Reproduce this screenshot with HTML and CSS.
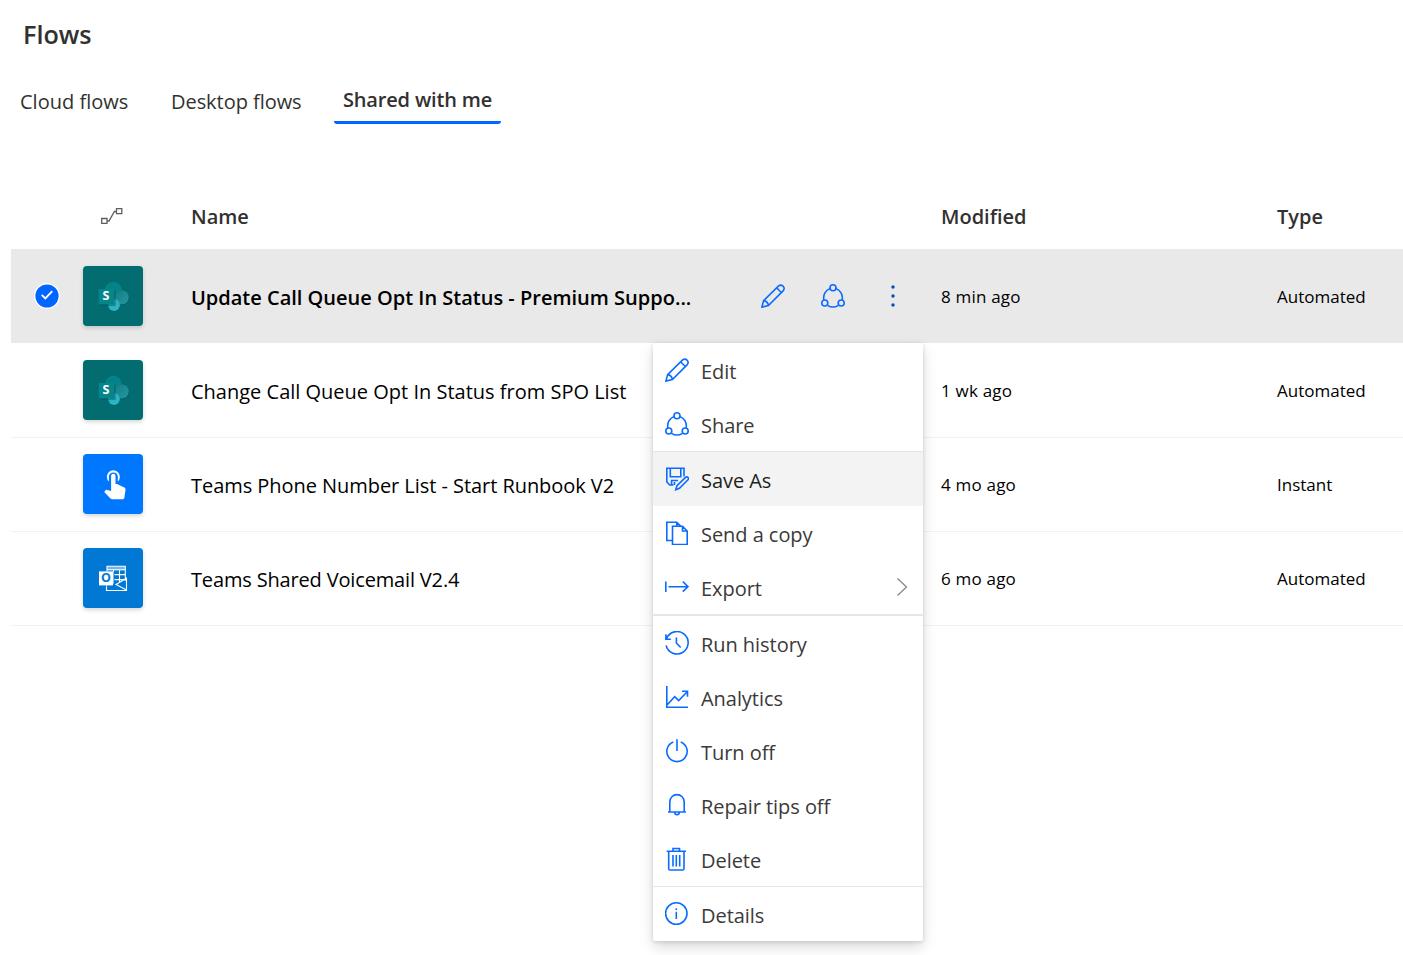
FILE: index.html
```html
<!DOCTYPE html>
<html lang="en">
<head>
<meta charset="utf-8">
<title>Flows</title>
<link rel="stylesheet" href="styles.css">
</head>
<body>
<svg class="defs" width="0" height="0">
  <defs>
    <linearGradient id="g-mid" x1="0" y1="0" x2="1" y2="1"><stop offset="0" stop-color="#137f86"/><stop offset="1" stop-color="#2596a0"/></linearGradient>
    <symbol id="i-pencil" viewBox="0 0 24 24"><path d="M.9 23.1 2.6 16.6 17.6 1.9a3.35 3.35 0 0 1 4.7 4.7L7.4 21.5ZM15.6 3.8l4.7 4.7M2.6 16.6c2.6.3 4.4 2.2 4.8 4.9"/></symbol>
    <symbol id="i-share" viewBox="0 0 24 24"><circle cx="12" cy="3.8" r="3"/><circle cx="3.8" cy="19" r="3"/><circle cx="20.2" cy="19" r="3"/><path d="M9.2 4.4C4.6 6 1.8 11 2.9 16M14.8 4.4c4.6 1.6 7.4 6.600 6.3 11.600M6.500 21.3c3.300 2.100 7.700 2.100 11 0"/></symbol>
    <symbol id="i-sharepoint" viewBox="0 0 32 32">
      <circle cx="16.300" cy="10.600" r="9.300" fill="#024f53" opacity=".4"/><circle cx="16.300" cy="10.100" r="8.700" fill="#038387"/>
      <circle cx="24.500" cy="18" r="7.500" fill="#024f53" opacity=".5"/><circle cx="24.500" cy="17.400" r="7.200" fill="url(#g-mid)"/>
      <circle cx="17" cy="25.500" r="6" fill="#024f53" opacity=".4"/><circle cx="17" cy="25" r="5.900" fill="#2bb4c3"/>
      <path d="M3.500 10.500h15.200v15.600H3.500Z" fill="#025c60" opacity=".5"/><rect x="1.700" y="9" width="15.300" height="15.300" rx=".6" fill="#05868a"/>
    </symbol>
  </defs>
</svg>
<main class="page">
  <h1 class="title">Flows</h1>
  <nav class="tabs">
    <a class="tab tab-cloud">Cloud flows</a>
    <a class="tab tab-desktop">Desktop flows</a>
    <a class="tab active">Shared with me</a>
  </nav>
  <section class="table">
    <div class="row head">
      <div></div>
      <div><svg class="flow-icon" viewBox="0 0 22 16"><path d="M.7 10.500h5.300v5H.7ZM15.500.7h5.300v5h-5.300ZM6 13h2L13.400 3.500h2.100"/></svg></div>
      <div>Name</div><div></div>
      <div>Modified</div><div>Type</div>
    </div>
    <div class="row selected">
      <div class="check"><svg viewBox="0 0 26 26"><circle cx="13" cy="13" r="13" fill="#fff"/><circle cx="13" cy="13" r="11.600" fill="#06f"/><path d="m7.700 11.800 3.600 3.600 7-7.300" fill="none" stroke="#fff" stroke-width="1.900"/></svg></div>
      <div class="tile teal"><svg viewBox="0 0 32 32"><use href="#i-sharepoint"/></svg><b>S</b></div>
      <div class="name">Update Call Queue Opt In Status - Premium Suppo...</div>
      <div class="actions"><svg class="icon"><use href="#i-pencil"/></svg><svg class="icon"><use href="#i-share"/></svg><svg class="dots" viewBox="0 0 24 24"><circle cx="12" cy="3" r="1.700"/><circle cx="12" cy="12" r="1.700"/><circle cx="12" cy="21" r="1.700"/></svg></div>
      <div class="cell ago">8 min ago</div><div class="cell">Automated</div>
    </div>
    <div class="row">
      <div></div>
      <div class="tile teal"><svg viewBox="0 0 32 32"><use href="#i-sharepoint"/></svg><b>S</b></div>
      <div class="name">Change Call Queue Opt In Status from SPO List</div><div></div>
      <div class="cell ago">1 wk ago</div><div class="cell">Automated</div>
    </div>
    <div class="row">
      <div></div>
      <div class="tile blue"><svg viewBox="0 0 32 32"><path fill="#fff" transform="translate(1 .3)" d="M10.900 13.200A6.500 6.500 0 1 1 19.800 13.200V8a4.500 4.500 0 0 0-8.900 0ZM13.100 7.700a2.200 2.200 0 0 1 4.400 0v8.100h1.600l7.200 3.500c1 .5 1.300 1.300 1.200 2.200l-1.100 7.600c-.2 1.200-1 1.900-2.200 1.900H14.300c-.7 0-1.300-.3-1.800-.8L6.200 23.700l1.200-1.600c.5-.5 1-.6 1.700-.5l4 1Z"/></svg></div>
      <div class="name phone">Teams Phone Number List - Start Runbook V2</div><div></div>
      <div class="cell ago">4 mo ago</div><div class="cell">Instant</div>
    </div>
    <div class="row">
      <div></div>
      <div class="tile azure"><svg viewBox="0 0 32 32"><g transform="translate(.5 .8)"><path d="M9.500 3.500h18v4h-18Z" fill="#fff" opacity=".45"/><g fill="none" stroke="#fff" stroke-width="1.100"><path d="M9.500 9V3.500h18.300V18M9.500 7h18M10 11.800h17.500M16 7v14M22 7v13M15 16.800h12.500M9 22v5.700h20V15.500l-10.500 6.200 10.500 5.500"/></g><path d="M2.500 9h15v14.800h-15Z" fill="#0078d4" opacity=".5"/><rect x="1.500" y="8.600" width="14" height="14" fill="#fff"/></g></svg><b>O</b></div>
      <div class="name voicemail">Teams Shared Voicemail V2.4</div><div></div>
      <div class="cell ago">6 mo ago</div><div class="cell">Automated</div>
    </div>
  </section>
</main>
<div class="menu">
  <div class="item"><svg class="icon"><use href="#i-pencil"/></svg><span>Edit</span></div>
  <div class="item"><svg class="icon"><use href="#i-share"/></svg><span>Share</span></div>
  <hr>
  <div class="item hover"><svg class="icon" viewBox="0 0 24 24"><path d="M8.500 18H4.800L1.800 15V1.300h17.200V9.500M5.300 1.500v8.300h10.500V1.500M6.600 18v-4.500h6.400M9.500 18v-3M10.800 22.600l1.200-3.900 8.500-8.300a1.700 1.700 0 0 1 2.500 2.400l-8.500 8.500Z"/></svg><span>Save As</span></div>
  <div class="item"><svg class="icon" viewBox="0 0 24 24"><path d="M7.500 19.500H1.800V1.300h10l4 4M7.500 5.300h10L22.200 10v13.500H7.500ZM17.500 5.500V10h4.500M11.800 1.500v3.800"/></svg><span>Send a copy</span></div>
  <div class="item"><svg class="icon" viewBox="0 0 24 24"><path d="M.8 6.500v10.500M3.500 11.700h19.500M17.800 6.700l5.200 5-5.200 5"/></svg><span>Export</span><svg class="chev" viewBox="0 0 12 20"><path d="m1.500 1.500 9 8.500-9 8.500"/></svg></div>
  <hr class="thick">
  <div class="item"><svg class="icon" viewBox="0 0 24 24"><path d="M1.600 7.500A11.200 11.200 0 1 1 1.100 14.500M.9 3.200v5h5M11.400 6.500V12l4.300 4.500"/></svg><span>Run history</span></div>
  <div class="item"><svg class="icon" viewBox="0 0 24 24"><path d="M1.800 1v21.300H23M2.300 19.800l7.400-8.200 4 4L22 7M17 6.300h5.500v5.500"/></svg><span>Analytics</span></div>
  <div class="item"><svg class="icon" viewBox="0 0 24 24"><path d="M12 .3V12M8.300 2.900a10.200 10.200 0 1 0 7.400 0"/></svg><span>Turn off</span></div>
  <div class="item"><svg class="icon" viewBox="0 0 24 24"><path d="M3 19h18M4.800 19V8.800a7.200 7.200 0 0 1 14.400 0V19M9.700 19.300c0 3.300 4.600 3.300 4.600 0"/></svg><span>Repair tips off</span></div>
  <div class="item"><svg class="icon" viewBox="0 0 24 24"><path d="M1.700 4.200h19.300M8 4V1.500h6.500V4M3.700 4.500v17.200q0 1.300 1.300 1.300h12.700q1.300 0 1.300-1.300V4.500M8 8v11.500M11.300 8v11.500M14.700 8v11.500"/></svg><span>Delete</span></div>
  <hr>
  <div class="item"><svg class="icon" viewBox="0 0 24 24"><circle cx="11.300" cy="11.500" r="10.700"/><path d="M11.300 9.700v7.300M11.300 6.300v1.700"/></svg><span>Details</span></div>
</div>
</body>
</html>
```
FILE: styles.css
```css
* { box-sizing: border-box; }
body { margin: 0; width: 1403px; height: 955px; overflow: hidden; position: relative; background: #fff; color: #323130; font-family: "Open Sans", "Noto Sans", sans-serif; font-size: 20px; }
.defs { position: absolute; }
.page { padding: 16px 0 0 11px; }
.title { margin: 0 0 0 12px; font-size: 25.2px; line-height: 36px; font-weight: 600; }
.tabs { display: flex; margin-top: 28px; height: 44px; }
.tab { line-height: 44px; }
.tab-cloud { margin-left: 9px; width: 151px; }
.tab-desktop { width: 163px; letter-spacing: -0.05px; }
.active { width: 167px; padding-left: 9px; line-height: 40px; font-weight: 600; letter-spacing: -0.17px; border-bottom: 3px solid #06f; border-radius: 0 0 3px 3px; }
.table { margin-top: 60px; }
.row { display: grid; grid-template-columns: 72px 108px 556px 194px 336px 126px; height: 94px; align-items: center; box-shadow: 0 1px 0 #f3f2f1; color: #000; }
.head { height: 65px; box-shadow: none; font-weight: 600; color: #323130; }
.flow-icon { display: block; width: 22px; height: 16px; margin: -2px 0 0 18px; fill: none; stroke: #605e5c; stroke-width: 1.3; }
.selected { background: #e9e9e9; box-shadow: none; }
.selected .name { font-weight: 600; }
.name { white-space: nowrap; padding-top: 2px; }
.phone { letter-spacing: -0.05px; }
.voicemail { letter-spacing: -0.16px; }
.cell { font-size: 17px; padding-top: 1px; }
.ago { letter-spacing: 0.2px; }
.check svg { display: block; width: 26px; height: 26px; margin-left: 23px; }
.tile { position: relative; width: 60px; height: 60px; border-radius: 4px; display: grid; place-items: center; box-shadow: 0 2px 4px rgba(0,0,0,.16); }
.tile svg { width: 32px; height: 32px; }
.tile b { position: absolute; left: 16px; top: 22px; width: 14px; line-height: 16px; text-align: center; font-size: 12.5px; color: #fff; }
.teal { background: #036c70; }
.blue { background: #0077ff; }
.azure { background: #0078d4; }
.azure b { color: #0078d4; }
.actions { display: flex; gap: 36px; padding-left: 14px; }
.icon { display: block; flex: none; width: 24px; height: 24px; fill: none; stroke: #0a6cff; stroke-width: 1.6; }
.dots { width: 24px; height: 24px; fill: #0050b8; }
.menu { position: absolute; left: 653px; top: 343px; width: 270px; background: #fff; box-shadow: 0 6px 14px rgba(0,0,0,.15), 0 1px 4px rgba(0,0,0,.13); border-radius: 2px; color: #3b3a39; }
.menu hr { margin: 0; border: 0; height: 1px; background: #e6e6e6; }
.menu .thick { height: 2px; }
.item { display: flex; align-items: center; height: 54px; padding: 0 15px 0 12px; gap: 12px; letter-spacing: -0.05px; }
.item span { padding-top: 2px; }
.hover { background: #f3f3f3; color: #201f1e; }
.chev { width: 12px; height: 20px; margin-left: auto; fill: none; stroke: #8a8886; stroke-width: 1.3; }
```
